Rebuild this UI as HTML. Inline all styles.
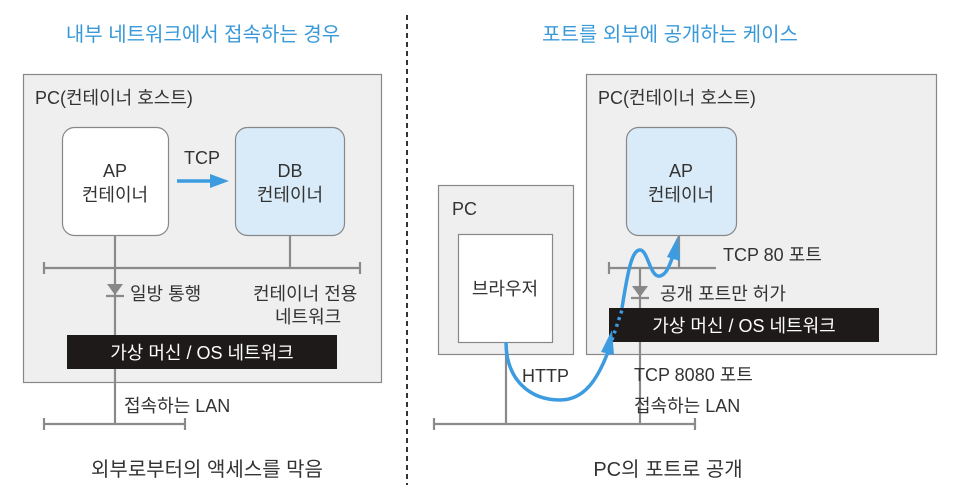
<!DOCTYPE html>
<html><head><meta charset="utf-8"><style>
html,body{margin:0;padding:0;background:#fff;}
svg{display:block;}
text{font-family:"Liberation Sans","Noto Sans CJK KR",sans-serif;fill:#333;font-size:18px;}
</style></head><body>
<svg width="956" height="498" viewBox="0 0 956 498" xmlns="http://www.w3.org/2000/svg">
<g stroke="#888" stroke-width="1.2">
<rect x="23.5" y="74.5" width="358" height="308" fill="#efefef"/>
<rect x="438.5" y="185.5" width="135" height="169" fill="#efefef"/>
<rect x="586.5" y="74.5" width="350" height="280" fill="#efefef"/>
<rect x="62.5" y="127.5" width="106" height="108" rx="12" fill="#fff"/>
<rect x="235.5" y="127.5" width="109" height="108" rx="12" fill="#d9ebf8"/>
<rect x="626.5" y="127.5" width="110" height="108" rx="12" fill="#d9ebf8"/>
<rect x="458.5" y="234.5" width="94" height="108" fill="#fff"/>
</g>
<g stroke="#8a8a8a" stroke-width="2.2" fill="none">
<line x1="115" y1="235" x2="115" y2="424"/>
<line x1="290" y1="235" x2="290" y2="268"/>
<line x1="44" y1="268" x2="360" y2="268"/>
<line x1="44" y1="262" x2="44" y2="274"/><line x1="360" y1="262" x2="360" y2="274"/>
<line x1="44" y1="424" x2="185" y2="424"/>
<line x1="44" y1="418" x2="44" y2="430"/><line x1="185" y1="418" x2="185" y2="430"/>
<line x1="106" y1="296" x2="124" y2="296"/>
<line x1="679" y1="235" x2="679" y2="268"/>
<line x1="609" y1="268" x2="716" y2="268"/>
<line x1="609" y1="262" x2="609" y2="274"/>
<line x1="640" y1="268" x2="640" y2="424"/>
<line x1="631" y1="298" x2="649" y2="298"/>
<line x1="506" y1="342" x2="506" y2="424"/>
<line x1="434" y1="424" x2="695" y2="424"/>
<line x1="434" y1="418" x2="434" y2="430"/><line x1="695" y1="418" x2="695" y2="430"/>
</g>
<polygon points="107,284 123,284 115,295" fill="#888"/>
<polygon points="632,286 648,286 640,297" fill="#888"/>
<rect x="67" y="335" width="270" height="34" fill="#1e1a1a"/>
<rect x="609" y="308" width="270" height="34" fill="#1e1a1a"/>
<line x1="407" y1="15" x2="407" y2="485" stroke="#333" stroke-width="2" stroke-dasharray="5,4"/>
<line x1="177" y1="181" x2="212" y2="181" stroke="#3d9be0" stroke-width="3.5"/>
<polygon points="210,174 229,181 210,188" fill="#3d9be0"/>
<path d="M506 342 C506 380 530 400 560 400 C585 400 598 378 608 352" fill="none" stroke="#3d9be0" stroke-width="3.5"/>
<polygon points="601,352 612,330 614,355" fill="#3d9be0"/>
<path d="M612 340 L622 310" fill="none" stroke="#3d9be0" stroke-width="3.5" stroke-dasharray="3,4"/>
<path d="M622 308 C628 270 632 250 640 250 C648 250 650 278 660 276 C668 274 670 262 674 254" fill="none" stroke="#3d9be0" stroke-width="3.5"/>
<polygon points="667,257 678,236 680,261" fill="#3d9be0"/>
<g>
<text x="203" y="41" text-anchor="middle" style="fill:#3a9ad9;font-size:20px">내부 네트워크에서 접속하는 경우</text>
<text x="670" y="41" text-anchor="middle" style="fill:#3a9ad9;font-size:20px">포트를 외부에 공개하는 케이스</text>
<text x="35" y="104">PC(컨테이너 호스트)</text>
<text x="598" y="104">PC(컨테이너 호스트)</text>
<text x="115" y="177" text-anchor="middle">AP</text>
<text x="115" y="201" text-anchor="middle">컨테이너</text>
<text x="290" y="177" text-anchor="middle">DB</text>
<text x="290" y="201" text-anchor="middle">컨테이너</text>
<text x="681" y="177" text-anchor="middle">AP</text>
<text x="681" y="201" text-anchor="middle">컨테이너</text>
<text x="202" y="164" text-anchor="middle">TCP</text>
<text x="130" y="300">일방 통행</text>
<text x="253" y="300">컨테이너 전용</text>
<text x="275" y="323">네트워크</text>
<text x="202" y="359" text-anchor="middle" style="fill:#fff">가상 머신 / OS 네트워크</text>
<text x="744" y="332" text-anchor="middle" style="fill:#fff">가상 머신 / OS 네트워크</text>
<text x="124" y="412">접속하는 LAN</text>
<text x="207" y="476" text-anchor="middle" style="font-size:20px">외부로부터의 액세스를 막음</text>
<text x="668" y="476" text-anchor="middle" style="font-size:20px">PC의 포트로 공개</text>
<text x="452" y="215">PC</text>
<text x="505" y="295" text-anchor="middle">브라우저</text>
<text x="723" y="261">TCP 80 포트</text>
<text x="660" y="300">공개 포트만 허가</text>
<text x="522" y="382">HTTP</text>
<text x="634" y="381">TCP 8080 포트</text>
<text x="634" y="412">접속하는 LAN</text>
</g>
</svg>
</body></html>
